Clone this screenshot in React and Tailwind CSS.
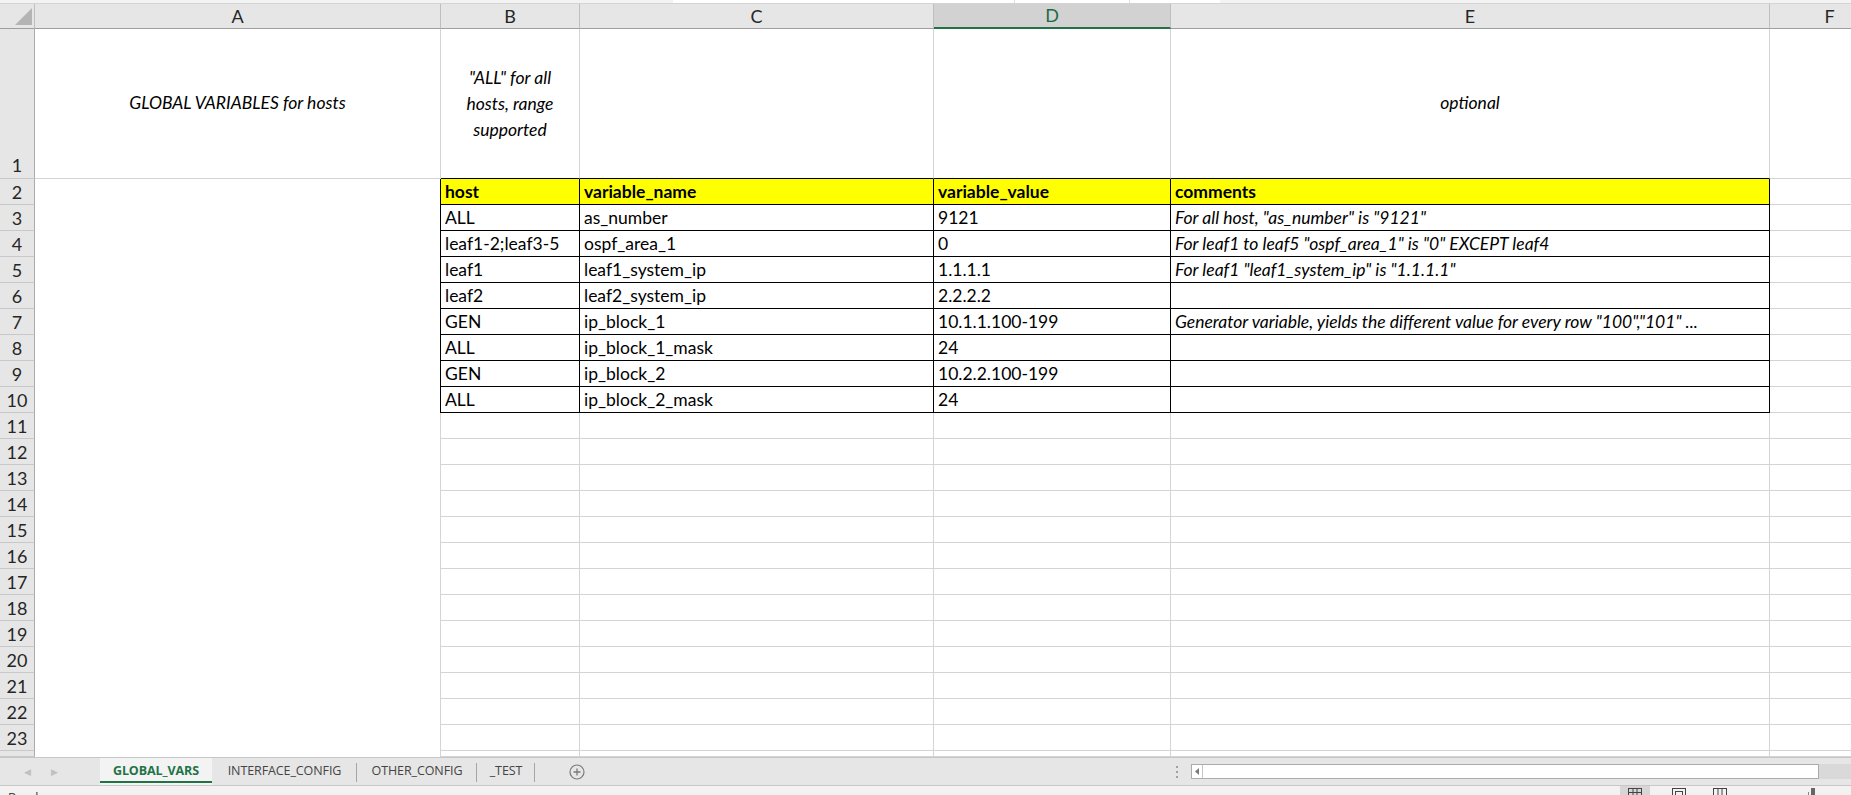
import React from "react";

const CELL_FONT = { fontFamily: "Lato, 'Noto Sans', sans-serif" };

const colHeaders = [
  { k: "A", w: "w-[406px]" },
  { k: "B", w: "w-[139px]" },
  { k: "C", w: "w-[354px]" },
  { k: "D", w: "w-[237px]" },
  { k: "E", w: "w-[599px]" },
  { k: "F", w: "w-[120px]" },
];

const data = [
  ["host", "variable_name", "variable_value", "comments"],
  ["ALL", "as_number", "9121", 'For all host, "as_number" is "9121"'],
  ["leaf1-2;leaf3-5", "ospf_area_1", "0", 'For leaf1 to leaf5 "ospf_area_1" is "0" EXCEPT leaf4'],
  ["leaf1", "leaf1_system_ip", "1.1.1.1", 'For leaf1 "leaf1_system_ip" is "1.1.1.1"'],
  ["leaf2", "leaf2_system_ip", "2.2.2.2", ""],
  ["GEN", "ip_block_1", "10.1.1.100-199", 'Generator variable, yields the different value for every row "100","101" ...'],
  ["ALL", "ip_block_1_mask", "24", ""],
  ["GEN", "ip_block_2", "10.2.2.100-199", ""],
  ["ALL", "ip_block_2_mask", "24", ""],
];

const tableW = ["w-[139px]", "w-[354px]", "w-[237px]", "w-[599px]"];

function RowHead({ label, h, end }) {
  return (
    <div
      className={`w-[35px] shrink-0 ${h} bg-[#e6e6e6] border-r border-b border-r-[#ababab] border-b-[#c8c8c8] flex justify-center overflow-hidden ${end ? "items-end pb-[1px]" : "items-center"} text-[18px] leading-[24px] text-[#262626]`}
    >
      {label}
    </div>
  );
}

function DataRow({ idx, row }) {
  const header = idx === 0;
  return (
    <div className="flex h-[26px] shrink-0">
      <RowHead label={idx + 2} h="h-[26px]" />
      <div className="w-[406px] shrink-0 h-[26px] border-r border-black" />
      {row.map((t, j) => (
        <div
          key={j}
          className={`${tableW[j]} shrink-0 h-[26px] border-r border-b border-black pl-[4px] leading-[26px] text-[17.5px] whitespace-nowrap overflow-hidden ${header ? "bg-[#ffff00] font-bold" : ""} ${!header && j === 3 ? "italic" : ""} text-black`}
        >
          {t}
        </div>
      ))}
      <div className="w-[120px] shrink-0 h-[26px] border-r border-b border-[#d4d4d4]" />
    </div>
  );
}

function EmptyRow({ n, h = "h-[26px]" }) {
  return (
    <div className={`flex ${h} shrink-0`}>
      <RowHead label={n} h={h} />
      <div className={`w-[406px] shrink-0 ${h} border-r border-[#d4d4d4]`} />
      <div className={`w-[139px] shrink-0 ${h} border-r border-b border-[#d4d4d4]`} />
      <div className={`w-[354px] shrink-0 ${h} border-r border-b border-[#d4d4d4]`} />
      <div className={`w-[237px] shrink-0 ${h} border-r border-b border-[#d4d4d4]`} />
      <div className={`w-[599px] shrink-0 ${h} border-r border-b border-[#d4d4d4]`} />
      <div className={`w-[120px] shrink-0 ${h} border-r border-b border-[#d4d4d4]`} />
    </div>
  );
}

function SheetTab({ label, w, active, sep }) {
  return (
    <div className={`${w} shrink-0 h-full relative flex items-center justify-center`}>
      {active && <div className="absolute inset-0 bg-[#f3f3f3]" />}
      <span
        className={`relative text-[12.5px] tracking-[-0.1px] ${active ? "font-bold text-[#217346]" : "text-[#444444]"}`}
        style={{ fontFamily: "'Open Sans', 'Noto Sans', sans-serif" }}
      >
        {label}
      </span>
      {active && <div className="absolute left-0 right-0 bottom-[2px] h-[2px] bg-[#217346]" />}
      {sep && <div className="absolute right-0 top-[5px] h-[19px] w-px bg-[#a6a6a6]" />}
    </div>
  );
}

export default function App() {
  const empties = [];
  for (let n = 11; n <= 23; n++) empties.push(n);
  return (
    <div className="w-[1851px] h-[795px] overflow-hidden bg-white flex flex-col" style={CELL_FONT}>
      {/* formula bar remnant */}
      <div className="h-[4px] shrink-0 bg-[#f3f3f3] border-b border-[#d4d4d4] flex">
        <div className="w-[673px] shrink-0" />
        <div className="w-[342px] shrink-0 bg-white border-r border-[#e0e0e0]" />
        <div className="w-[115px] shrink-0 bg-white border-r border-[#e0e0e0]" />
        <div className="w-[90px] shrink-0 bg-white" />
      </div>

      {/* column header */}
      <div className="flex h-[25px] shrink-0">
        <div className="w-[35px] shrink-0 h-[25px] bg-[#e6e6e6] border-r border-b border-r-[#bfbfbf] border-b-[#9e9e9e] relative">
          <svg className="absolute left-0 top-0" width="35" height="25" viewBox="0 0 35 25">
            <polygon points="32,4 32,21 15,21" fill="#b4b4b4" />
          </svg>
        </div>
        {colHeaders.map((c) => (
          <div
            key={c.k}
            className={`${c.w} shrink-0 h-[25px] border-r border-r-[#bfbfbf] flex items-center justify-center text-[18px] ${c.k === "D" ? "bg-[#d2d2d2] border-b-2 border-b-[#217346] text-[#1d6b43]" : "bg-[#e6e6e6] border-b border-b-[#9e9e9e] text-[#262626]"}`}
          >
            {c.k}
          </div>
        ))}
      </div>

      {/* row 1 */}
      <div className="flex h-[150px] shrink-0">
        <RowHead label={1} h="h-[150px]" end />
        <div className="w-[406px] shrink-0 h-[150px] border-r border-b border-[#d4d4d4] flex items-center justify-center italic text-[17.5px] text-black">
          GLOBAL VARIABLES for hosts
        </div>
        <div className="w-[139px] shrink-0 h-[150px] border-r border-b border-r-[#d4d4d4] border-b-black flex items-center justify-center text-center italic text-[17.5px] leading-[26px] text-black px-[6px]">
          "ALL" for all hosts, range supported
        </div>
        <div className="w-[354px] shrink-0 h-[150px] border-r border-b border-r-[#d4d4d4] border-b-black" />
        <div className="w-[237px] shrink-0 h-[150px] border-r border-b border-r-[#d4d4d4] border-b-black" />
        <div className="w-[599px] shrink-0 h-[150px] border-r border-b border-r-[#d4d4d4] border-b-black flex items-center justify-center italic text-[17.5px] text-black">
          optional
        </div>
        <div className="w-[120px] shrink-0 h-[150px] border-r border-b border-[#d4d4d4]" />
      </div>

      {data.map((row, i) => (
        <DataRow key={i} idx={i} row={row} />
      ))}
      {empties.map((n) => (
        <EmptyRow key={n} n={n} />
      ))}
      <EmptyRow n="" h="h-[6px]" />

      {/* sheet tabs bar */}
      <div className="h-[28px] shrink-0 bg-[#e6e6e6] border-t border-[#c6c6c6] flex items-stretch">
        <div className="w-[100px] shrink-0 flex items-center">
          <span className="ml-[24px] text-[9px] text-[#c0c0c0]">◀</span>
          <span className="ml-[20px] text-[9px] text-[#c0c0c0]">▶</span>
        </div>
        <SheetTab label="GLOBAL_VARS" w="w-[112px]" active />
        <SheetTab label="INTERFACE_CONFIG" w="w-[145px]" sep />
        <SheetTab label="OTHER_CONFIG" w="w-[120px]" sep />
        <SheetTab label="_TEST" w="w-[58px]" sep />
        <div className="w-[84px] shrink-0 flex items-center justify-center">
          <svg width="16" height="16" viewBox="0 0 16 16">
            <circle cx="8" cy="8" r="7" fill="none" stroke="#7a7a7a" strokeWidth="1.2" />
            <path d="M8 4.5v7M4.5 8h7" stroke="#7a7a7a" strokeWidth="1.3" />
          </svg>
        </div>
        <div className="w-[572px] shrink-0 flex items-center justify-end pr-[13px]">
          <div className="flex flex-col gap-[3px]">
            <div className="w-[2px] h-[2px] bg-[#a0a0a0]" />
            <div className="w-[2px] h-[2px] bg-[#a0a0a0]" />
            <div className="w-[2px] h-[2px] bg-[#a0a0a0]" />
          </div>
        </div>
        <div className="w-[628px] shrink-0 flex items-center">
          <div className="w-full h-[15px] bg-white border border-[#ababab] flex">
            <div className="w-[11px] h-full border-r border-[#c6c6c6] flex items-center justify-center">
              <svg width="5" height="7" viewBox="0 0 5 7">
                <polygon points="4,0 4,7 0,3.5" fill="#7a7a7a" />
              </svg>
            </div>
          </div>
        </div>
        <div className="flex-1 flex items-center">
          <div className="w-full h-[15px] bg-[#d9d9d9]" />
        </div>
      </div>

      {/* status bar */}
      <div className="h-[10px] shrink-0 bg-[#f3f2f1] border-t border-[#c8c8c8] flex overflow-hidden relative">
        <span className="absolute left-[8px] top-[4px] text-[13px] leading-[15px] text-[#444444]" style={{ fontFamily: "'Open Sans', sans-serif" }}>
          Ready
        </span>
        <div className="absolute left-[1620px] top-0 w-[30px] h-full bg-[#d6d6d6]" />
        <svg className="absolute left-[1628px] top-[2px]" width="14" height="10" viewBox="0 0 14 10">
          <rect x="0.5" y="0.5" width="13" height="12" fill="none" stroke="#444" />
          <path d="M0.5 4.5h13M5 0.5v12M9 0.5v12" stroke="#444" />
        </svg>
        <svg className="absolute left-[1672px] top-[2px]" width="14" height="10" viewBox="0 0 14 10">
          <rect x="0.5" y="0.5" width="13" height="12" fill="none" stroke="#444" />
          <rect x="3.5" y="3.5" width="7" height="6" fill="none" stroke="#444" />
        </svg>
        <svg className="absolute left-[1713px] top-[2px]" width="14" height="10" viewBox="0 0 14 10">
          <rect x="0.5" y="0.5" width="13" height="12" fill="none" stroke="#444" />
          <path d="M5 0.5v12M9 0.5v12" stroke="#444" />
        </svg>
        <div className="absolute left-[1808px] top-[6px] w-px h-[4px] bg-[#888]" />
        <div className="absolute left-[1811px] top-[2px] w-[4px] h-[8px] bg-[#666]" />
      </div>
    </div>
  );
}
